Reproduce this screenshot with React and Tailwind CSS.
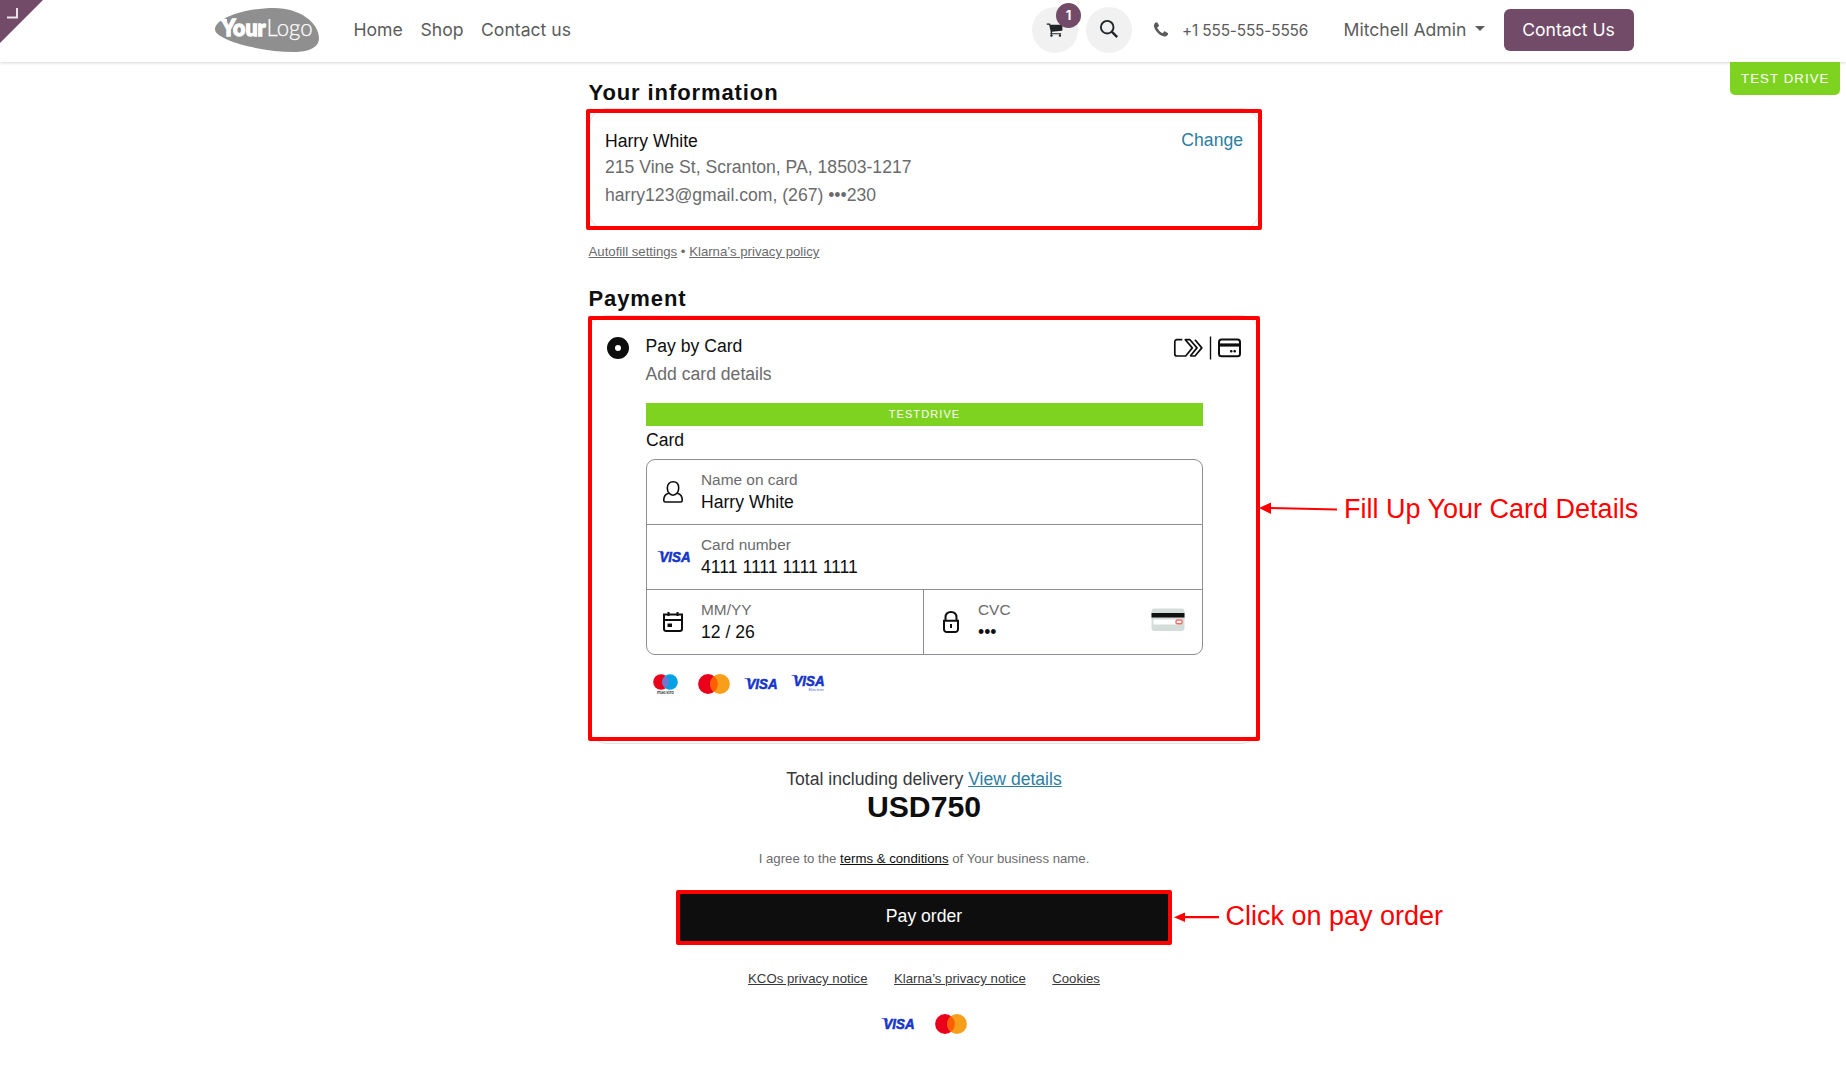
import React from "react";

function Logo() {
  return (
    <svg width="106" height="46" viewBox="0 0 106 46" className="block">
      <path
        d="M1 22 C2 10 34 1 60 1 C86 1 105 16 105 31 C105 41 94 45 80 45 C46 45 0 33 1 22Z"
        fill="#8f8f8f"
      />
      <g fill="#fff" stroke="#fff" fontFamily="Lato">
        <text x="7.500" y="29" fontSize="22.5" fontWeight="900" strokeWidth="1.3" textLength="44" lengthAdjust="spacingAndGlyphs">
          Your
        </text>
        <text x="52.5" y="29" fontSize="23.5" fontWeight="300" strokeWidth="0.25" textLength="46" lengthAdjust="spacingAndGlyphs">
          Logo
        </text>
      </g>
      <path d="M4 12h9v2.2H9l-1 1-1-1.500H4z" fill="#fff" />
    </svg>
  );
}

function CartIcon() {
  return (
    <svg width="17" height="17" viewBox="0 0 1792 1792" fill="#212529">
      <path d="M704 1536q0 52-38 90t-90 38-90-38-38-90 38-90 90-38 90 38 38 90zm896 0q0 52-38 90t-90 38-90-38-38-90 38-90 90-38 90 38 38 90zm128-1088v512q0 24-16.500 42.500t-40.500 21.500l-1044 122q13 60 13 70 0 16-24 64h920q26 0 45 19t19 45-19 45-45 19h-1024q-26 0-45-19t-19-45q0-11 8-31.500t16-36 21.500-40 15.500-29.500l-177-823h-204q-26 0-45-19t-19-45 19-45 45-19h256q16 0 28.500 6.500t19.500 15.500 13 24.500 8 26 5.500 29.500 4.500 26h1201q26 0 45 19t19 45z" />
    </svg>
  );
}

function SearchIcon() {
  return (
    <svg width="20" height="20" viewBox="0 0 20 20" fill="none" stroke="#212529">
      <circle cx="8.200" cy="8.200" r="6.300" strokeWidth="1.900" />
      <path d="M12.700 12.700L18.200 18.200" strokeWidth="2.400" />
    </svg>
  );
}

function PhoneIcon() {
  return (
    <svg width="18" height="18" viewBox="0 0 1792 1792" fill="#5b5b5b">
      <path d="M1600 1240q0 27-10 70.500t-21 68.500q-21 50-122 106-94 51-186 51-27 0-53-3.500t-57.500-12.500-47-14.500-55.500-20.500-49-18q-98-35-175-83-127-79-264-216t-216-264q-48-77-83-175-3-9-18-49t-20.500-55.500-14.500-47-12.500-57.500-3.500-53q0-92 51-186 56-101 106-122 25-11 68.500-21t70.500-10q14 0 21 3 18 6 53 76 11 19 30 54t35 63.500 31 53.500q3 4 17.500 25t21.500 35.500 7 28.500q0 20-28.500 50t-62 55-62 53-28.500 46q0 9 5 22.500t8.500 20.500 14 24 11.500 19q76 137 174 235t235 174q2 1 19 11.500t24 14 20.500 8.500 22.500 5q18 0 46-28.500t53-62 55-62 50-28.500q14 0 28.500 7t35.500 21.500 25 17.500q25 15 53.500 31t63.500 35 54 30q70 35 76 53 3 7 3 21z" />
    </svg>
  );
}

function Visa({ electron = false }) {
  return (
    <svg width="34" height="20" viewBox="0 0 34 20" className="block shrink-0 overflow-visible">
      <text
        x="2.500"
        y="15"
        fontFamily="Liberation Sans"
        fontStyle="italic"
        fontWeight="700"
        fontSize="15.500"
        fill="#1434cb"
        stroke="#1434cb"
        strokeWidth="0.6"
        textLength="31"
        lengthAdjust="spacingAndGlyphs"
      >
        VISA
      </text>
      <path d="M0.500 4.200h5.500l1 3.500C5.500 6 3 5 0.500 4.700z" fill="#1434cb" />
      {electron && (
        <text x="17.500" y="20.300" fontFamily="Liberation Sans" fontSize="4.400" fill="#5a6fdc" textLength="15.500">
          Electron
        </text>
      )}
    </svg>
  );
}

function Mastercard() {
  return (
    <svg width="32" height="20" viewBox="0 0 32 20" className="block shrink-0">
      <circle cx="10" cy="10" r="9.900" fill="#eb001b" />
      <circle cx="22" cy="10" r="9.900" fill="#f79e1b" />
      <path d="M16 2.130a9.900 9.900 0 0 1 0 15.740a9.900 9.900 0 0 1 0-15.740z" fill="#ff5f00" />
    </svg>
  );
}

function Maestro() {
  return (
    <svg width="26" height="22" viewBox="0 0 26 22" className="block shrink-0 overflow-visible">
      <circle cx="8" cy="8" r="7.800" fill="#eb001b" />
      <circle cx="17" cy="8" r="7.800" fill="#00a2e5" />
      <path d="M12.500 1.630a7.800 7.800 0 0 1 0 12.740a7.800 7.800 0 0 1 0-12.740z" fill="#7375cf" />
      <text x="4" y="19.800" fontFamily="Inter" fontWeight="500" fontSize="4" fill="#111" textLength="17" lengthAdjust="spacingAndGlyphs">
        maestro
      </text>
    </svg>
  );
}

function PersonIcon() {
  return (
    <svg width="22" height="24" viewBox="0 0 22 24" fill="none" stroke="#0e0e0f" strokeWidth="1.600">
      <path d="M11 1.800c3.400 0 5.700 2.300 5.700 6.200 0 4-2.400 7.200-5.700 7.200S5.300 12 5.300 8C5.300 4.100 7.600 1.800 11 1.800z" />
      <path d="M6.700 13.200C3.400 14.200 1.800 16.300 1.800 19.600v.9c0 .9.600 1.500 1.500 1.500h15.400c.9 0 1.500-.6 1.500-1.500v-.9c0-3.300-1.600-5.400-4.900-6.400" />
    </svg>
  );
}

function CalendarIcon() {
  return (
    <svg width="22" height="22" viewBox="0 0 22 22" fill="none" stroke="#0e0e0f" strokeWidth="2">
      <path d="M2 3.500h18v14.300a2.200 2.200 0 0 1-2.200 2.200H4.200A2.200 2.200 0 0 1 2 17.800zM2 9h18M6.500 1v4M15.500 1v4" />
      <path d="M5.500 12.500h4.500v3.500h-4.500z" fill="#0e0e0f" stroke="none" />
    </svg>
  );
}

function LockIcon() {
  return (
    <svg width="18" height="24" viewBox="0 0 18 24" fill="none" stroke="#0e0e0f" strokeWidth="2" className="ml-px">
      <path d="M2 10.800h14v8.400a2.800 2.800 0 0 1-2.800 2.800H4.800A2.800 2.800 0 0 1 2 19.200zM3.500 10.800V7.500C3.500 4 5.800 2 9 2s5.500 2 5.500 5.500v3.300M9 14v4" />
    </svg>
  );
}

function CvcIcon() {
  return (
    <svg width="34" height="24" viewBox="0 0 34 24" className="block">
      <rect x="0.500" y="0.500" width="33" height="22.500" rx="3" fill="#d5dddb" />
      <rect x="0.500" y="5" width="33" height="4.500" fill="#111" />
      <rect x="2.500" y="11.500" width="26" height="5" fill="#fff" />
      <rect x="25" y="12" width="6" height="3.800" rx="1.400" fill="#fff" stroke="#fb6b64" strokeWidth="1.400" />
    </svg>
  );
}

function ClickToPayIcons() {
  return (
    <svg width="68" height="24" viewBox="0 0 68 24" fill="none" stroke="#0e0e0f">
      <g strokeWidth="1.700" strokeLinejoin="round">
        <path d="M9.300 3.700H3.800A2 2 0 0 0 1.800 5.700V18a2 2 0 0 0 2 2H12.700L19.300 11.900L12.300 3.700H17L24 11.900L17.300 20" />
        <path d="M17.300 20H22L28.800 11.900L22 3.700" />
      </g>
      <path d="M37.500 .5v23" strokeWidth="1.400" />
      <rect x="46" y="3.500" width="21" height="16.800" rx="2.500" strokeWidth="2" />
      <path d="M46 9h21" strokeWidth="3.200" />
      <path d="M58.200 15.200h3.600" strokeWidth="2.600" strokeLinecap="round" strokeDasharray="0.100 3.300" />
    </svg>
  );
}

function Field({ icon, label, value, children, className = "" }) {
  return (
    <div className={"flex h-[65px] items-start " + className}>
      <div className="ml-[3px] flex h-[63px] w-[46px] shrink-0 items-center justify-center">{icon}</div>
      <div className="ml-[5px] mt-[8px] flex-1">
        <div className="h-[23px] text-[15.4px] leading-[23px] text-[#6b6b6d]">{label}</div>
        <div className="h-[23px] text-[17.6px] leading-[22px] text-[#0e0e0f]">{value}</div>
      </div>
      {children}
    </div>
  );
}

function Header() {
  return (
    <header className="relative flex h-[62px] items-start bg-white pl-[214px] pr-[212px] font-['Inter',sans-serif] text-[17.6px] text-[#5b5b5b] shadow-[0_1px_3px_rgba(0,0,0,0.16)]">
      <div className="absolute left-0 top-0 size-[43px] bg-[#714b67] [clip-path:polygon(0_0,100%_0,0_100%)]">
        <svg width="20" height="20" viewBox="0 0 20 20" fill="none" stroke="#fff" strokeWidth="2" strokeOpacity="0.85">
          <path d="M7 17.500h10V8" />
        </svg>
      </div>
      <div className="mt-[7px]">
        <Logo />
      </div>
      <nav className="ml-[33.500px] mt-[16px] flex h-7 leading-7">
        <a className="w-[67px]">Home</a>
        <a className="w-[60.500px]">Shop</a>
        <a className="whitespace-nowrap">Contact us</a>
      </nav>
      <div className="ml-auto flex">
        <div className="relative mt-[7px] flex size-[46px] items-center justify-center rounded-full bg-[#f1f1f1] pb-[2px] pr-[2px]">
          <CartIcon />
          <span className="absolute -right-[3px] -top-1 size-[25px] rounded-full bg-[#714b67] text-center text-[13px] font-bold leading-[25px] text-white">
            1
          </span>
        </div>
        <div className="ml-2 mt-[7px] flex size-[46px] items-center justify-center rounded-full bg-[#f1f1f1] pb-[2px]">
          <SearchIcon />
        </div>
        <div className="mt-[16px] flex h-7 w-[211.500px] items-center">
          <span className="ml-[20px] w-[30px]">
            <PhoneIcon />
          </span>
          <span className="mt-[2px] whitespace-nowrap text-[15.400px] leading-7 tracking-[-0.170px]">+1 555-555-5556</span>
        </div>
        <div className="mt-[16px] flex h-7 w-[160.500px] whitespace-nowrap leading-7">
          Mitchell Admin
          <span className="ml-[9px] mt-[10px] size-0 border-x-[5px] border-t-[5px] border-x-transparent border-t-[#5b5b5b]" />
        </div>
        <button className="mt-[9px] h-[42px] w-[130px] rounded-[6px] bg-[#714b67] pr-px pt-px text-white">Contact Us</button>
      </div>
    </header>
  );
}

function Note({ className, children, arrow }) {
  return (
    <div className={"absolute z-10 flex items-center whitespace-nowrap text-[27px] leading-8 text-[#ff0000] " + className}>
      {arrow}
      {children}
    </div>
  );
}

export default function App() {
  return (
    <div className="h-[1081px] overflow-hidden bg-white font-['Liberation_Sans',Arial,sans-serif] text-[17.6px] text-[#0e0e0f]">
      <Header />
      <div className="absolute right-[6px] top-[62px] h-[33px] w-[110px] rounded-b-[5px] bg-[#7ed321] pl-[11px] text-[13.200px] leading-[33px] tracking-[1.100px] text-white">
        TEST DRIVE
      </div>
      <main className="mx-auto flex w-[672px] flex-col pl-[2px] pt-[17px]">
        <h2 className="-ml-[0.500px] h-[29px] text-[22px] font-bold leading-[27px] tracking-[0.900px]">Your information</h2>
        <section className="relative flex h-[122px] justify-between rounded-[18px] border border-[#e2e2e4] pl-[15px] pr-[15px] pt-[19px]">
          <div>
            <div className="h-[26px] leading-[26px]">Harry White</div>
            <div className="h-[27px] leading-[26px] text-[#6b6b6d]">215 Vine St, Scranton, PA, 18503-1217</div>
            <div className="h-[28px] leading-[28px] text-[#6b6b6d]">harry123@gmail.com, (267) •••230</div>
          </div>
          <a className="-mt-px h-[26px] leading-[26px] text-[#2c7ea1]">Change</a>
          <div className="absolute -left-1 top-0 h-[121px] w-[676px] rounded-[2px] border-4 border-[#ff0000]" />
        </section>
        <p className="-ml-[0.500px] mt-[12px] h-[43px] text-[13.200px] leading-5 text-[#6b6b6d]">
          <a className="underline">Autofill settings</a> • <a className="underline">Klarna’s privacy policy</a>
        </p>
        <h2 className="-ml-[0.500px] h-[30px] text-[22px] font-bold leading-[27px] tracking-[0.900px]">Payment</h2>
        <section className="relative h-[429px] rounded-[18px] border border-[#e2e2e4]">
          <div className="flex h-[87px] pl-[17px] pt-[16px]">
            <span className="mt-[5px] size-[22px] rounded-full border-[8px] border-[#0e0e0f] bg-white" />
            <div className="ml-[16.500px] flex-1">
              <div className="h-7 leading-7">Pay by Card</div>
              <div className="h-7 leading-7 text-[#6b6b6d]">Add card details</div>
            </div>
            <div className="mr-[17px] mt-[4px]">
              <ClickToPayIcons />
            </div>
          </div>
          <div className="ml-[56px] w-[557px]">
            <div className="h-[23px] bg-[#7ed321] text-center text-[11px] leading-[23px] tracking-[1.100px] text-white">TESTDRIVE</div>
            <div className="h-[33px] leading-[28px]">Card</div>
            <div className="h-[196px] divide-y divide-[#8e8d93] overflow-hidden rounded-[9px] border border-[#8e8d93]">
              <Field icon={<PersonIcon />} label="Name on card" value="Harry White" />
              <Field icon={<span className="ml-[2px]"><Visa /></span>} label="Card number" value="4111 1111 1111 1111" />
              <div className="flex h-[65px]">
                <Field className="w-[276px]" icon={<CalendarIcon />} label="MM/YY" value="12 / 26" />
                <Field className="flex-1 border-l border-[#8e8d93]" icon={<LockIcon />} label="CVC" value="•••">
                  <div className="mr-[17px] mt-[18px]">
                    <CvcIcon />
                  </div>
                </Field>
              </div>
            </div>
            <div className="mt-[19px] flex items-start pl-[7px]">
              <Maestro />
              <div className="ml-[19px]">
                <Mastercard />
              </div>
              <div className="ml-[14px]">
                <Visa />
              </div>
              <div className="-mt-[3px] ml-[13px]">
                <Visa electron />
              </div>
            </div>
          </div>
          <div className="absolute -left-[2px] top-0 h-[425px] w-[672px] rounded-[2px] border-4 border-[#ff0000]" />
          <Note
            className="left-[669px] top-[177px]"
            arrow={
              <svg width="85" height="14" viewBox="0 0 85 14" className="-mt-0.5 block">
                <path d="M11 7L78 8.500" stroke="#f00" strokeWidth="2.200" />
                <path d="M0 7L12 1.500V13z" fill="#f00" />
              </svg>
            }
          >
            Fill Up Your Card Details
          </Note>
        </section>
        <div className="mt-[21px] flex flex-col items-center">
          <p className="h-[26px] leading-[28px] text-[#39383c]">
            Total including delivery <a className="text-[#2c7ea1] underline">View details</a>
          </p>
          <p className="h-[58px] text-[30.200px] font-bold leading-[32px]">USD750</p>
          <p className="h-[41px] text-[13.200px] leading-5 text-[#6b6b6d]">
            I agree to the <a className="text-[#0e0e0f] underline">terms &amp; conditions</a> of Your business name.
          </p>
          <div className="relative">
            <button className="block h-[55px] w-[496px] rounded-[2px] border-4 border-[#ff0000] bg-[#0e0e0f] pb-[2px] text-white">
              Pay order
            </button>
            <Note
              className="left-[498px] top-[10px]"
              arrow={
                <svg width="51.5" height="14" viewBox="0 0 51.5 14" className="mt-[2px] block">
                  <path d="M9 7.200H45" stroke="#f00" strokeWidth="2.200" />
                  <path d="M0 7.200L11 2.400V12z" fill="#f00" />
                </svg>
              }
            >
              Click on pay order
            </Note>
          </div>
          <div className="mt-[24px] flex gap-[26.500px] text-[13.200px] leading-5 text-[#39383c]">
            <a className="underline">KCOs privacy notice</a>
            <a className="underline">Klarna’s privacy notice</a>
            <a className="underline">Cookies</a>
          </div>
          <div className="mt-[25px] flex items-center gap-[20px]">
            <Visa />
            <Mastercard />
          </div>
        </div>
      </main>
    </div>
  );
}
